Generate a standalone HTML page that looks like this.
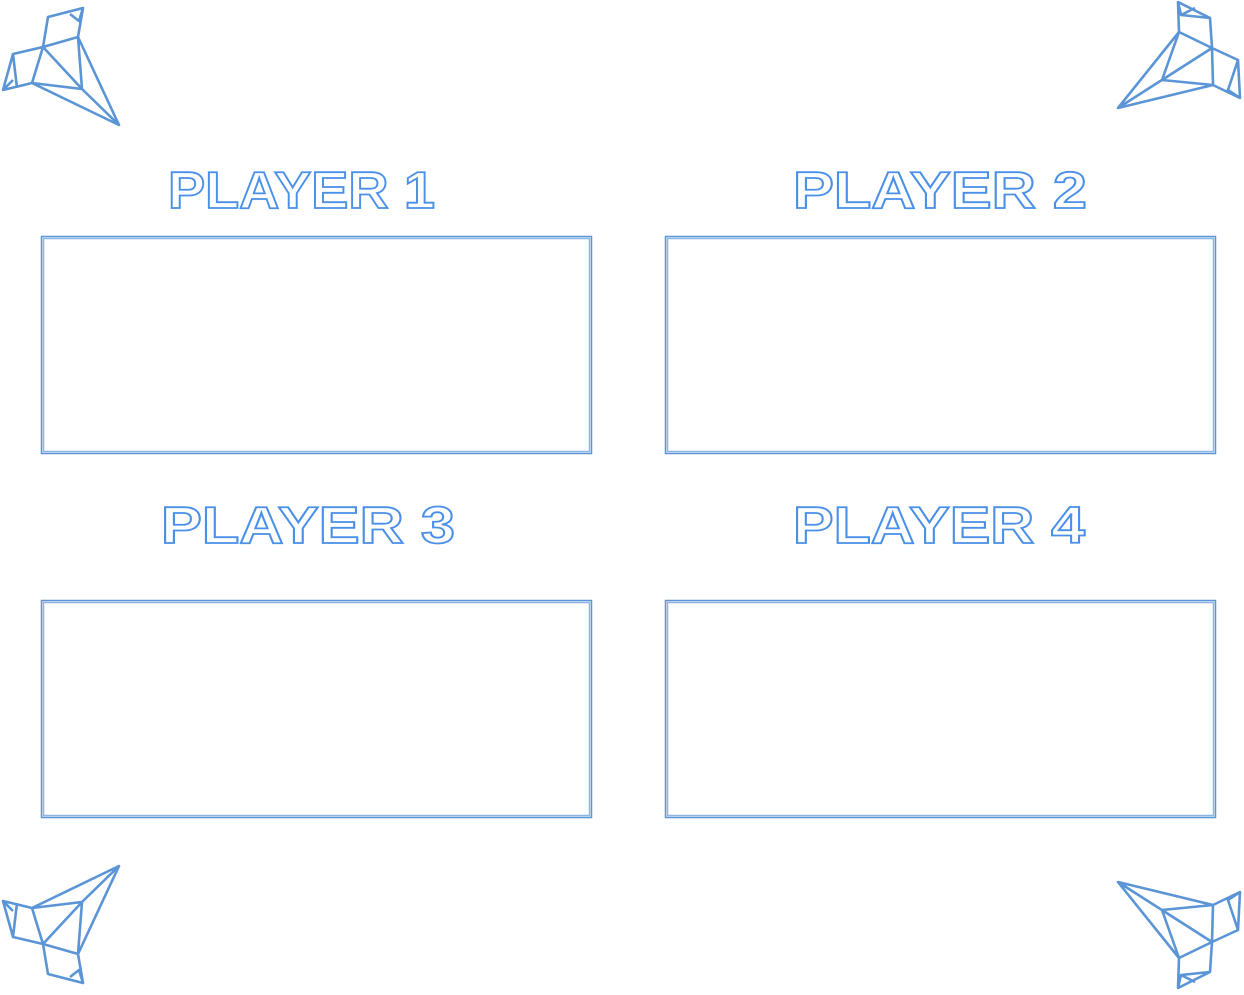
<!DOCTYPE html>
<html><head><meta charset="utf-8"><style>
html,body{margin:0;padding:0;background:#fff;width:1244px;height:995px;overflow:hidden}
svg{position:absolute;left:0;top:0}
</style></head><body>
<svg width="1244" height="995" viewBox="0 0 1244 995">
<defs>
<g id="b1" fill="none" stroke="#5b95d6" stroke-width="2.6" stroke-linejoin="round">
<path d="M83,8 L48,17 L43,47 L78,37 L83,8 Z M70,14 L79,21 L83,8 M43,47 L13,54 L3,90 L32,83 L43,47 M13,54 L17,88 M3,90 L13,80 M43,47 L82,89 L78,37 L119,125 L82,89 L32,83 L119,125"/>
</g>
<g id="b2" fill="none" stroke="#5b95d6" stroke-width="2.6" stroke-linejoin="round">
<path d="M1178,2 L1210,18 L1212,48 L1179,32 Z M1178,2 L1181,15 L1210,18 M1181,15 L1195,8 M1212,48 L1238,60 L1240,98 L1213,85 L1212,48 M1238,60 L1228,90 L1240,98 M1179,32 L1118,108 L1213,85 L1162,80 L1179,32 M1162,80 L1212,48 M1118,108 L1212,48"/>
</g>
</defs>
<use href="#b1"/>
<use href="#b2"/>
<use href="#b1" transform="translate(0,991) scale(1,-1)"/>
<use href="#b2" transform="translate(0,990) scale(1,-1)"/>
<g fill="none" stroke="#5b95d6" stroke-width="1.5">
<rect x="41.5" y="236.5" width="550" height="217"/><rect x="43.5" y="238.5" width="546" height="213" stroke="#8db6e6"/>
<rect x="665.5" y="236.5" width="550" height="217"/><rect x="667.5" y="238.5" width="546" height="213" stroke="#8db6e6"/>
<rect x="41.5" y="600.5" width="550" height="217"/><rect x="43.5" y="602.5" width="546" height="213" stroke="#8db6e6"/>
<rect x="665.5" y="600.5" width="550" height="217"/><rect x="667.5" y="602.5" width="546" height="213" stroke="#8db6e6"/>
</g>
<g font-family="Liberation Sans, sans-serif" font-weight="bold" font-size="52" fill="none" stroke="#4a90e8" stroke-width="1.8">
<text x="168" y="208" textLength="267" lengthAdjust="spacingAndGlyphs">PLAYER 1</text>
<text x="793" y="208" textLength="294" lengthAdjust="spacingAndGlyphs">PLAYER 2</text>
<text x="161" y="543" textLength="294" lengthAdjust="spacingAndGlyphs">PLAYER 3</text>
<text x="793" y="543" textLength="292" lengthAdjust="spacingAndGlyphs">PLAYER 4</text>
</g>
</svg>
</body></html>
